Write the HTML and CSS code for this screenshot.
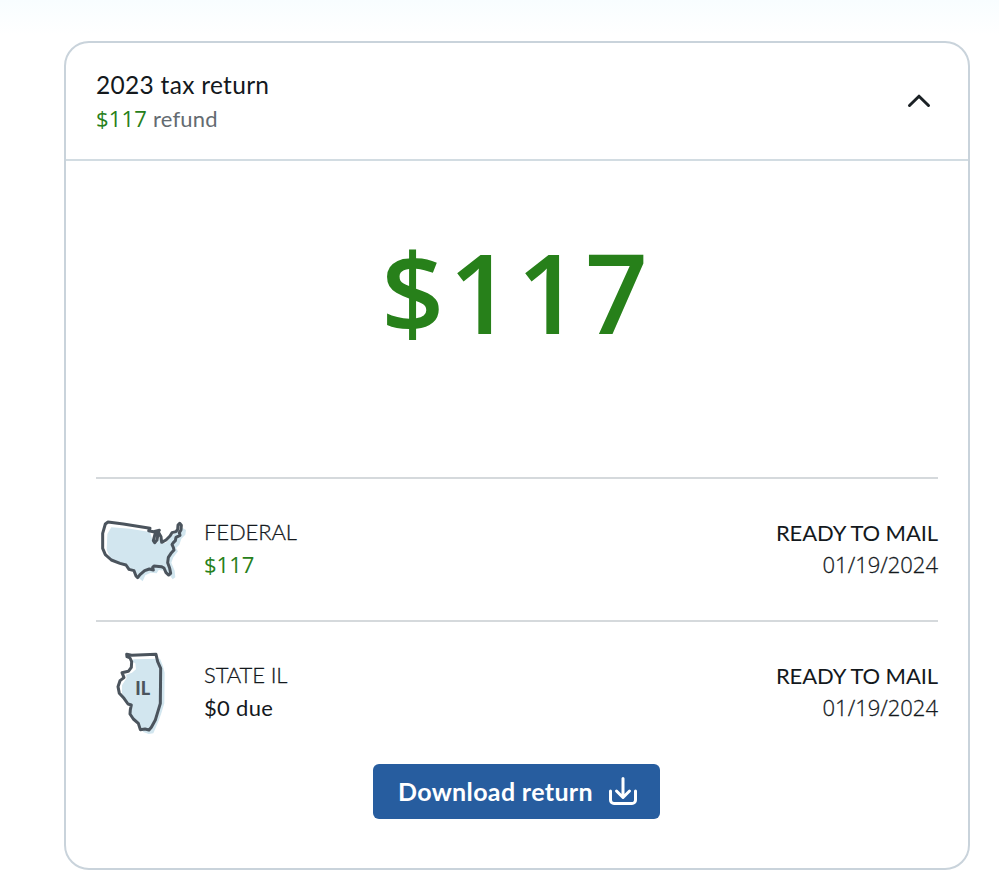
FILE: index.html
```
<!DOCTYPE html>
<html lang="en">
<head>
    <meta charset="UTF-8">
    <meta name="viewport" content="width=device-width, initial-scale=1.0">
    <title>2023 tax return</title>
    <link rel="stylesheet" href="styles.css">
</head>
<body>
    <div class="card">
        <div class="card-header">
            <div>
                <h2 class="title">2023 tax return</h2>
                <p class="subtitle"><span class="money">$117</span> refund</p>
            </div>
            <svg class="chevron" viewBox="0 0 24 14" fill="none">
                <path d="M2.5 11.5 12 2.2l9.5 9.3"/>
            </svg>
        </div>

        <div class="amount">$117</div>

        <div class="row">
            <svg class="map" viewBox="18 -39 324 315">
                <path class="shade" d="M64 52 120 56 180 66 190 98 202 98 208 84 214 100 228 98 246 76 262 66 278 54 288 60 286 74 274 86 268 104 258 114 264 124 250 142 244 158 254 182 256 202 248 208 238 194 228 182 206 180 200 190 182 188 166 196 158 214 146 204 136 186 118 180 108 166 88 160 62 146 50 120 52 72Z"/>
                <path class="outline" d="M54 36 100 42 180 55 176 62 190 65 208 61 196 69 190 92 194 98 201 90 205 66 213 80 215 97 228 90 240 78 246 68 258 65 263 58 264 45 269 40 274 46 273 60 268 68 270 76 258 82 256 92 250 98 246 104 250 112 252 120 243 130 235 142 233 158 239 175 242 190 236 195 228 188 222 174 214 170 192 168 188 172 190 180 178 177 164 182 150 194 143 203 138 198 132 182 117 178 108 165 90 160 64 150 46 134 38 115 38 70 46 42Z"/>
            </svg>
            <div class="details">
                <p class="name">FEDERAL</p>
                <p class="money">$117</p>
            </div>
            <div class="status">
                <p class="ready">READY TO MAIL</p>
                <p class="date">01/19/2024</p>
            </div>
        </div>

        <div class="row">
            <svg class="map" viewBox="-12 0 324 315">
                <path class="shade" d="M100 58 180 56 188 76 194 98 193 190 184 220 176 242 160 280 146 282 130 276 116 254 100 238 92 222 96 200 84 194 72 175 66 160 66 136 80 114 78 104 96 98 108 88 106 70 98 66Z"/>
                <path class="outline" d="M80 43 95 46 168 43 173 65 182 85 181 190 172 220 166 240 154 262 147 270 135 267 121 269 115 250 100 237 90 222 91 209 94 195 84 192 72 175 58 160 54 140 60 122 72 113 66 98 85 94 94 82 95 65 90 54 81 50Z"/>
                <text x="128" y="164">IL</text>
            </svg>
            <div class="details">
                <p class="name">STATE IL</p>
                <p class="due">$0 due</p>
            </div>
            <div class="status">
                <p class="ready">READY TO MAIL</p>
                <p class="date">01/19/2024</p>
            </div>
        </div>

        <button class="download">
            <span>Download return</span>
            <svg viewBox="0 0 30 30" fill="none">
                <path d="M15 2.5v18M8.5 15l6.5 6.5 6.5-6.5M2.5 15v9a3.5 3.5 0 0 0 3.5 3.5h18a3.5 3.5 0 0 0 3.5-3.5v-9"/>
            </svg>
        </button>
    </div>
</body>
</html>
```
FILE: styles.css
```
* {
    box-sizing: border-box;
}

body {
    margin: 0;
    padding: 41px 29px 17px 64px;
    font-family: Lato, "Open Sans", sans-serif;
    color: #14191d;
    background: linear-gradient(#f8fdff, #fff 35px) #fff no-repeat;
}

h2,
p {
    margin: 0;
    font-weight: 400;
    white-space: nowrap;
}

.card {
    height: 829px;
    border: 2px solid #c9d3db;
    border-radius: 25px;
    background: #fff;
}

.card-header {
    display: flex;
    justify-content: space-between;
    height: 118px;
    padding: 24px 37px 0 30px;
    border-bottom: 2px solid #d2dce2;
}
.title {
    font-size: 24.5px;
    line-height: 36px;
    letter-spacing: 0.3px;
}
.subtitle {
    font-size: 22px;
    line-height: 30px;
    letter-spacing: 0.2px;
    color: #646b71;
}
.chevron {
    width: 24px;
    height: 14px;
    margin-top: 27px;
}
.chevron path {
    stroke: #1b2125;
    stroke-width: 3;
    stroke-linecap: round;
    stroke-linejoin: round;
}

/* figures */
.amount,
.money,
.date {
    font-family: "Open Sans", sans-serif;
}
.amount,
.money {
    color: #27801a;
}
.amount {
    height: 316px;
    padding-top: 65px;
    font-size: 110px;
    font-weight: 600;
    line-height: 130px;
    letter-spacing: 5px;
    text-align: center;
}

.row {
    display: flex;
    height: 143px;
    margin: 0 30px;
    padding-top: 18px;
    border-top: 2px solid #d5d9dc;
}
.map {
    width: 108px;
    height: 105px;
}
.map .shade {
    fill: #d2e6ef;
}
.map .outline {
    fill: none;
    stroke: #4b545d;
    stroke-width: 9;
    stroke-linejoin: round;
}
.map text {
    font-size: 54px;
    font-weight: 900;
    text-anchor: middle;
    fill: #4b545d;
}
.details {
    flex: 1;
    padding-top: 18px;
    font-size: 22px;
    line-height: 33px;
}
.status {
    padding-top: 20px;
    font-size: 22px;
    line-height: 32px;
    text-align: right;
}
.name,
.date {
    font-weight: 300;
    -webkit-text-stroke: 0.3px;
}
.name {
    letter-spacing: -0.1px;
}
.ready {
    letter-spacing: -0.1px;
}
.date {
    line-height: 30px;
}
.due {
    letter-spacing: 0.3px;
}

.download {
    display: flex;
    align-items: center;
    justify-content: space-between;
    width: 287px;
    height: 55px;
    margin: 1px 0 0 307px;
    padding: 0 22px 1px 25px;
    border: 0;
    border-radius: 6px;
    background: #275d9f;
    color: #fff;
    font-family: inherit;
    font-size: 25px;
    font-weight: 700;
    letter-spacing: 0.35px;
    white-space: nowrap;
}
.download svg {
    width: 30px;
    height: 30px;
}
.download path {
    stroke: #fff;
    stroke-width: 3;
    stroke-linecap: round;
    stroke-linejoin: round;
}
```
